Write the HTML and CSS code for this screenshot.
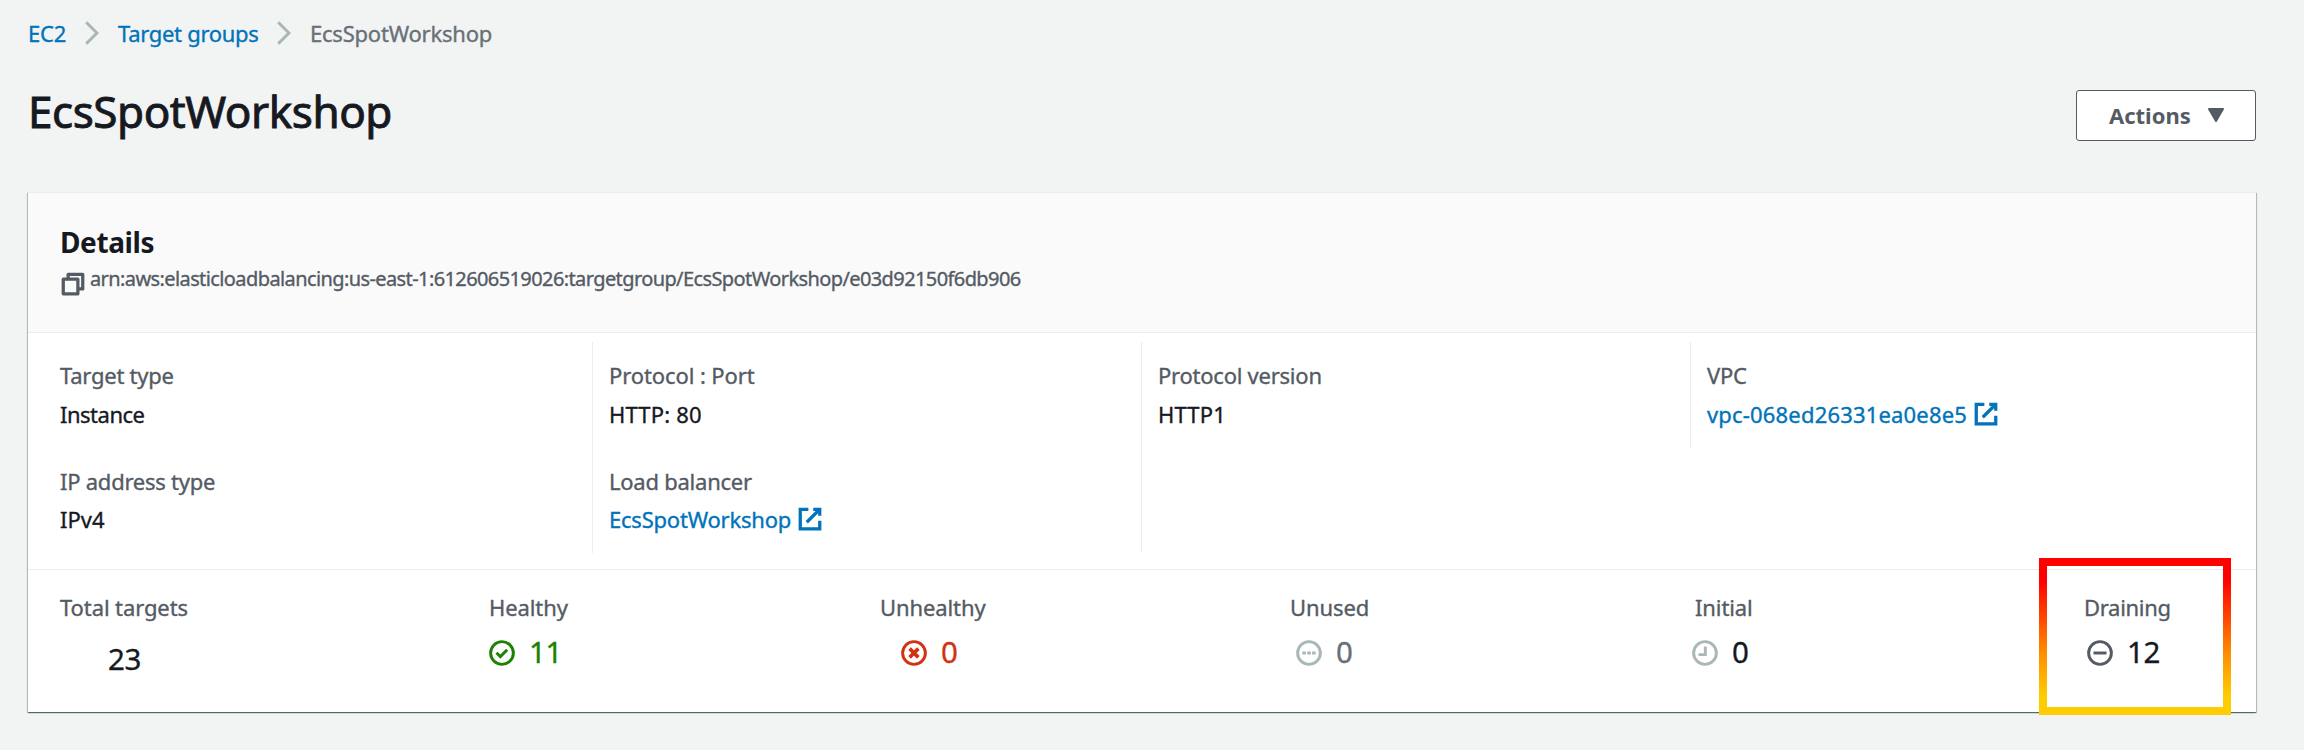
FILE: index.html
```html
<!DOCTYPE html>
<html lang="en">
<head>
<meta charset="utf-8">
<title>EcsSpotWorkshop</title>
<link rel="stylesheet" href="styles.css">
</head>
<body>
<nav class="crumbs">
  <a class="crumb-ec2">EC2</a>
  <svg class="chevron" viewBox="0 0 14 24"><path d="M1.2 1.2 12 12 1.2 22.8"/></svg>
  <a class="crumb-groups">Target groups</a>
  <svg class="chevron" viewBox="0 0 14 24"><path d="M1.2 1.2 12 12 1.2 22.8"/></svg>
  <span class="crumb-current">EcsSpotWorkshop</span>
</nav>
<header class="page-head">
  <h1>EcsSpotWorkshop</h1>
  <button class="actions"><span>Actions</span><svg class="caret" viewBox="0 0 16 14"><path d="M1 1h14L8 13z"/></svg></button>
</header>
<main class="panel">
  <section class="panel-head">
    <h2>Details</h2>
    <div class="arn">
      <svg class="icon copy" viewBox="0 0 16 16"><path d="M2 5h9v9H2z"/><path d="M5 5V2h9v9h-3"/></svg>
      <span>arn:aws:elasticloadbalancing:us-east-1:612606519026:targetgroup/EcsSpotWorkshop/e03d92150f6db906</span>
    </div>
  </section>
  <section class="fields">
    <div class="field"><div class="label">Target type</div><div class="value tight">Instance</div></div>
    <div class="field ruled"><div class="label port">Protocol : Port</div><div class="value http">HTTP: 80</div></div>
    <div class="field ruled"><div class="label">Protocol version</div><div class="value http">HTTP1</div></div>
    <div class="field ruled"><div class="label">VPC</div><div class="value"><a class="link vpc">vpc-068ed26331ea0e8e5</a><svg class="icon ext" viewBox="0 0 16 16"><path d="M10 2h4v4"/><path d="m6 10 8-8"/><path d="M14 9.05V14H2V2h5"/></svg></div></div>
    <div class="field second"><div class="label">IP address type</div><div class="value">IPv4</div></div>
    <div class="field ruled second"><div class="label">Load balancer</div><div class="value"><a class="link balancer">EcsSpotWorkshop</a><svg class="icon ext" viewBox="0 0 16 16"><path d="M10 2h4v4"/><path d="m6 10 8-8"/><path d="M14 9.05V14H2V2h5"/></svg></div></div>
    <div class="field ruled second"></div>
  </section>
  <section class="stats">
    <div class="stat total"><div class="label">Total targets</div><div class="count">23</div></div>
    <div class="stat healthy"><div class="label">Healthy</div><div class="count"><svg class="status" viewBox="0 0 16 16"><circle cx="8" cy="8" r="7"/><path d="m4.6 7.8 2.4 2.4 4.2-4.2"/></svg>11</div></div>
    <div class="stat unhealthy"><div class="label">Unhealthy</div><div class="count"><svg class="status" viewBox="0 0 16 16"><circle cx="8" cy="8" r="7"/><path class="cross" d="m5.3 5.3 5.4 5.4M10.7 5.3l-5.4 5.4"/></svg>0</div></div>
    <div class="stat unused"><div class="label">Unused</div><div class="count"><svg class="status" viewBox="0 0 16 16"><circle cx="8" cy="8" r="7"/><path d="M3.9 8h2.2M6.9 8h2.2M9.9 8h2.2"/></svg>0</div></div>
    <div class="stat initial"><div class="label">Initial</div><div class="count"><svg class="status" viewBox="0 0 16 16"><circle cx="8" cy="8" r="7"/><path d="M8.2 4v5H4"/></svg>0</div></div>
    <div class="stat draining"><div class="label">Draining</div><div class="count"><svg class="status" viewBox="0 0 16 16"><circle cx="8" cy="8" r="7"/><path d="M4 8h8"/></svg>12</div><div class="highlight"></div></div>
  </section>
</main>
</body>
</html>
```

FILE: styles.css
```css
* { box-sizing: border-box; }
body {
  margin: 0;
  padding: 18px 48px 0 28px;
  height: 750px;
  overflow: hidden;
  background: #f2f3f3;
  color: #16191f;
  font: 22px/30px "Noto Sans", "Open Sans", sans-serif;
  -webkit-text-stroke: 0.35px currentColor;
}
svg { display: block; flex: none; fill: none; stroke: currentColor; }
h1, h2 { margin: 0; }
.crumbs { display: flex; align-items: center; height: 30px; color: #687078; letter-spacing: -0.22px; }
.crumbs a, .link { color: #0073bb; }
.crumb-ec2 { width: 57px; }
.crumb-groups { width: 159px; }
.crumb-groups { letter-spacing: -0.3px; }
.chevron { width: 14px; height: 24px; margin-right: 19px; color: #aab7b8; stroke-width: 3; }
.page-head { display: flex; justify-content: space-between; margin: 33px 0 51px; height: 60px; }
h1 { font-size: 44px; line-height: 60px; font-weight: 400; letter-spacing: -0.45px; -webkit-text-stroke: 0.9px currentColor; }
.actions {
  display: flex;
  align-items: center;
  justify-content: space-between;
  width: 180px;
  height: 51px;
  margin-top: 9px;
  padding: 0 31px 2px 32px;
  border: 1.4px solid #545b64;
  border-radius: 3px;
  background: #fff;
  color: #545b64;
  font: 700 22px/30px "Noto Sans", sans-serif;
  -webkit-text-stroke: 0;
}
.caret { width: 16px; height: 14px; fill: currentColor; stroke-width: 2; stroke-linejoin: round; }
.panel {
  height: 520px;
  border-top: 1px solid #eaeded;
  background: #fff;
  box-shadow: 0 1px 1px rgba(0, 28, 36, .45), 1px 1px 1px rgba(0, 28, 36, .2), -1px 1px 1px rgba(0, 28, 36, .2);
}
.panel-head { height: 140px; padding: 30px 32px 0; background: #fafafa; border-bottom: 1px solid #eaeded; }
h2 { font-size: 28px; line-height: 38px; letter-spacing: -0.4px; -webkit-text-stroke: 0; }
.arn { display: flex; margin-top: 4px; font-size: 20px; line-height: 28px; letter-spacing: -0.6px; color: #545b64; }
.icon { width: 26px; height: 26px; stroke-width: 2; }
.copy { margin: 6px 4px 0 0; stroke-linejoin: round; }
.fields { display: grid; grid-template-columns: 564px repeat(3, 549px); grid-template-rows: 106px 105px; height: 237px; padding-top: 9px; border-bottom: 1px solid #eaeded; }
.field { padding: 18px 0 0 32px; }
.field .label { letter-spacing: -0.24px; }
.field .port { letter-spacing: -0.1px; }
.ruled { padding-left: 16px; border-left: 1px solid #eaeded; }
.label { color: #545b64; white-space: nowrap; }
.value { display: flex; margin-top: 9px; }
.tight { letter-spacing: -0.5px; }
.http { letter-spacing: 0.2px; }
.vpc { letter-spacing: 0.18px; }
.balancer { letter-spacing: -0.22px; }
.second .value { margin-top: 8px; }
.ext { margin: 2px 0 0 6px; color: #0073bb; }
.stats { display: grid; grid-template-columns: 429px 391px 410px 405px 389px 140px; padding: 22px 0 0 32px; height: 142px; }
.stat { position: relative; }
.stat .label { letter-spacing: -0.1px; }
.count { display: flex; margin-top: 10px; font-size: 29.5px; line-height: 40px; letter-spacing: -0.3px; }
.total .count { margin: 17px 0 0 48px; }
.status { width: 26px; height: 26px; margin: 8px 14px 0 0; stroke-width: 1.8; }
.cross { stroke-width: 2.2; }
.healthy .count { color: #1d8102; }
.unhealthy .count { margin-left: 21px; color: #d13212; }
.unused .count { margin-left: 6px; color: #687078; }
.unused .status, .initial .status { color: #aab7b8; }
.initial .count { margin-left: -3px; }
.draining .label { letter-spacing: -0.3px; }
.draining .count { margin-left: 3px; }
.draining .status { color: #545b64; }
.highlight {
  position: absolute;
  left: -45px;
  top: -34px;
  width: 192px;
  height: 157px;
  border: 8px solid;
  border-image: linear-gradient(#f00 15%, #ff9100 62%, #fc0 88%) 8;
}
```
